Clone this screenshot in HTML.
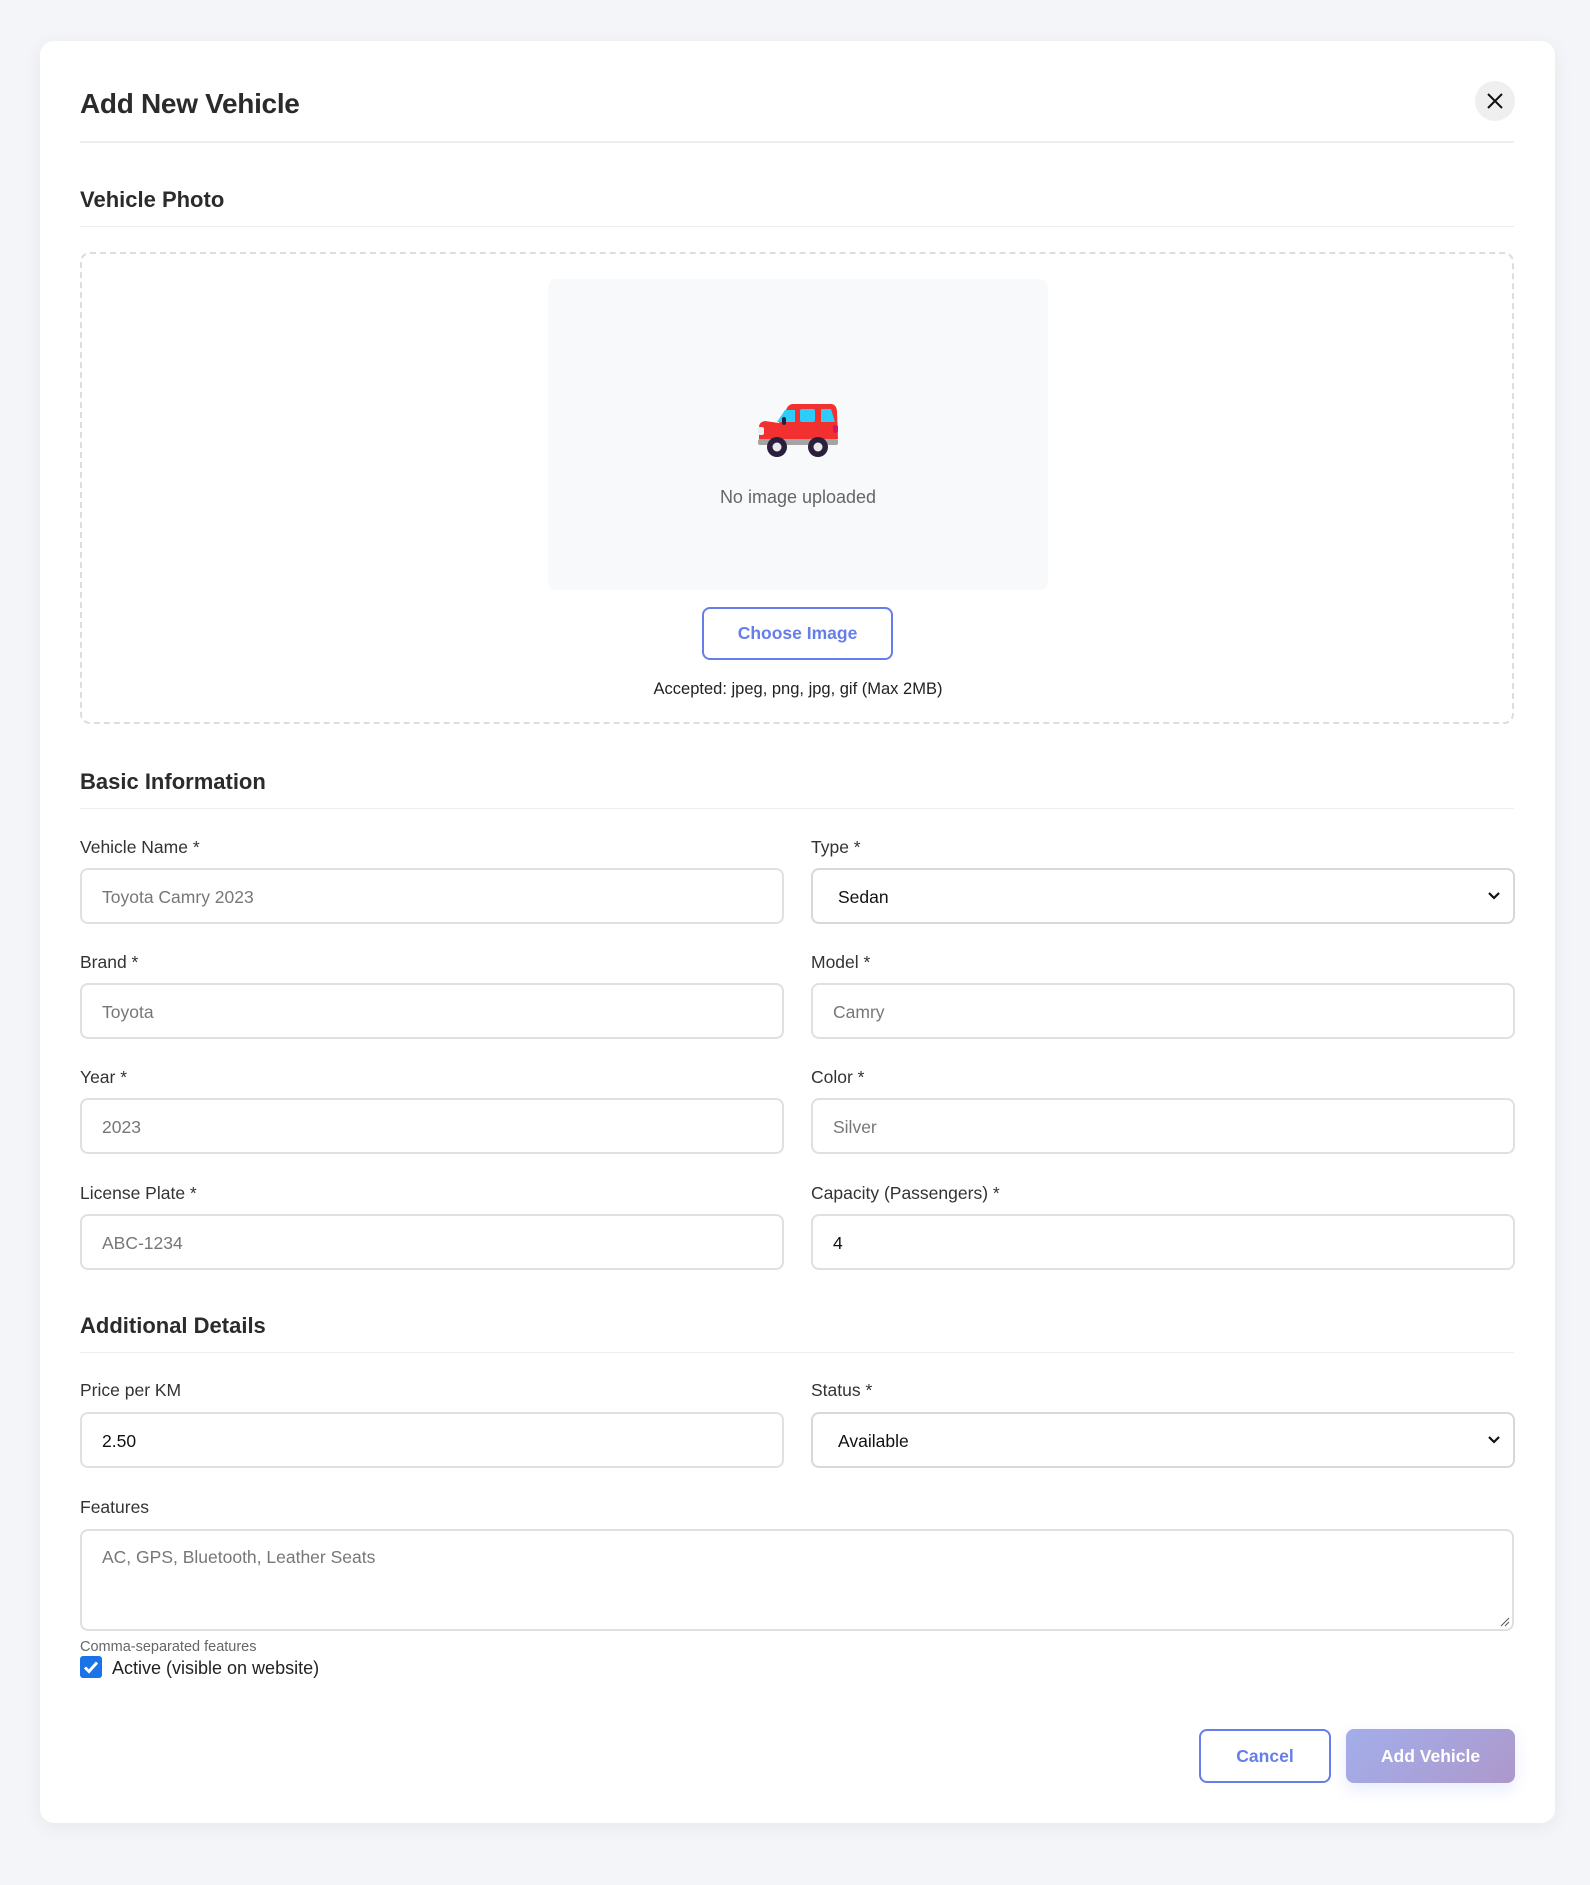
<!DOCTYPE html>
<html><head><meta charset="utf-8"><style>
*{box-sizing:border-box;margin:0;padding:0}
body{width:1590px;height:1885px;background:#f4f5f8;font-family:"Liberation Sans",sans-serif;position:relative;overflow:hidden}
.card{position:absolute;left:40px;top:41px;width:1515px;height:1782px;background:#fff;border-radius:14px;box-shadow:0 4px 20px rgba(0,0,0,0.06)}
.a{position:absolute}
h1{position:absolute;left:80px;top:88px;font-size:28px;font-weight:bold;color:#2b2b2b;letter-spacing:-0.3px}
.h2{position:absolute;left:80px;font-size:22px;font-weight:bold;color:#2b2b2b}
.line{position:absolute;left:80px;width:1434px;height:2px;background:#eeeeee}
.lbl{position:absolute;font-size:17.5px;color:#333;font-weight:500}
.in{position:absolute;width:704px;height:56px;border:2px solid #e0e0e0;border-radius:8px;font-size:17.5px;color:#777;padding:0 0 0 20px;line-height:54px}
.in.v{color:#111}
.sel{border-color:#d8d8d8}
.chev{position:absolute;right:12px;top:19px}
</style></head><body>
<div class="card"></div>
<h1>Add New Vehicle</h1>
<div class="a" style="left:1475px;top:81px;width:40px;height:40px;border-radius:50%;background:#efefef"></div>
<svg class="a" style="left:1485px;top:91px" width="20" height="20" viewBox="0 0 20 20"><path d="M3 3L17 17M17 3L3 17" stroke="#111" stroke-width="2"/></svg>
<div class="line" style="top:141px"></div>
<div class="h2" style="top:187px">Vehicle Photo</div>
<div class="line" style="top:226px;height:1px"></div>
<div class="a" style="left:80px;top:252px;width:1434px;height:472px;border:2px dashed #dddddd;border-radius:10px"></div>
<div class="a" style="left:548px;top:279px;width:500px;height:311px;background:#f8f9fa;border-radius:8px"></div>
<svg class="a" style="left:757px;top:403px" width="82" height="58" viewBox="0 0 82 58">
<path d="M22 20 L30 5 Q32 1 36 1 H74 Q79 1 80 8 L81 36 H2 V24 Q2 19 8 18 Z" fill="#f33030"/>
<path d="M20 19 L28 7 H38 V19 Z" fill="#2bcdfb"/>
<rect x="43" y="6" width="15" height="13" rx="2" fill="#2bcdfb"/>
<path d="M64 6 H74 L78 19 H64 Z" fill="#2bcdfb"/>
<rect x="25" y="14" width="4" height="8" rx="2" fill="#2a1f3c"/>
<rect x="1" y="24" width="6" height="8" rx="2" fill="#ededed"/>
<rect x="76" y="22" width="5" height="8" rx="2" fill="#d6155a"/>
<rect x="1" y="36" width="80" height="6" rx="2" fill="#a4a4a4"/>
<circle cx="20" cy="44" r="10" fill="#2a1f3c"/><circle cx="20" cy="44" r="4.5" fill="#e8e8e8"/>
<circle cx="61" cy="44" r="10" fill="#2a1f3c"/><circle cx="61" cy="44" r="4.5" fill="#e8e8e8"/>
</svg>
<div class="a" style="left:548px;top:487px;width:500px;text-align:center;font-size:18px;color:#666">No image uploaded</div>
<div class="a" style="left:702px;top:607px;width:191px;height:53px;border:2px solid #667eea;border-radius:8px;text-align:center;line-height:49px;font-size:17.5px;font-weight:bold;color:#667eea">Choose Image</div>
<div class="a" style="left:548px;top:680px;width:500px;text-align:center;font-size:16.5px;color:#222">Accepted: jpeg, png, jpg, gif (Max 2MB)</div>

<div class="h2" style="top:769px">Basic Information</div>
<div class="line" style="top:808px;height:1px"></div>

<div class="lbl" style="left:80px;top:837px">Vehicle Name *</div>
<div class="in" style="left:80px;top:868px">Toyota Camry 2023</div>
<div class="lbl" style="left:811px;top:837px">Type *</div>
<div class="in v sel" style="left:811px;top:868px;padding-left:25px">Sedan<svg class="chev" width="14" height="14" viewBox="0 0 14 14"><path d="M2 4L7 9L12 4" stroke="#111" stroke-width="2.2" fill="none"/></svg></div>

<div class="lbl" style="left:80px;top:952px">Brand *</div>
<div class="in" style="left:80px;top:983px">Toyota</div>
<div class="lbl" style="left:811px;top:952px">Model *</div>
<div class="in" style="left:811px;top:983px">Camry</div>

<div class="lbl" style="left:80px;top:1067px">Year *</div>
<div class="in" style="left:80px;top:1098px">2023</div>
<div class="lbl" style="left:811px;top:1067px">Color *</div>
<div class="in" style="left:811px;top:1098px">Silver</div>

<div class="lbl" style="left:80px;top:1183px">License Plate *</div>
<div class="in" style="left:80px;top:1214px">ABC-1234</div>
<div class="lbl" style="left:811px;top:1183px">Capacity (Passengers) *</div>
<div class="in v" style="left:811px;top:1214px">4</div>

<div class="h2" style="top:1313px">Additional Details</div>
<div class="line" style="top:1352px;height:1px"></div>

<div class="lbl" style="left:80px;top:1380px">Price per KM</div>
<div class="in v" style="left:80px;top:1412px">2.50</div>
<div class="lbl" style="left:811px;top:1380px">Status *</div>
<div class="in v sel" style="left:811px;top:1412px;padding-left:25px">Available<svg class="chev" width="14" height="14" viewBox="0 0 14 14"><path d="M2 4L7 9L12 4" stroke="#111" stroke-width="2.2" fill="none"/></svg></div>

<div class="lbl" style="left:80px;top:1497px">Features</div>
<div class="in" style="left:80px;top:1529px;width:1434px;height:102px;line-height:1;padding-top:18px">AC, GPS, Bluetooth, Leather Seats</div>
<svg class="a" style="left:1500px;top:1617px" width="10" height="10" viewBox="0 0 10 10"><path d="M1 9L9 1M5 9L9 5" stroke="#555" stroke-width="1"/></svg>
<div class="a" style="left:80px;top:1639px;font-size:14.5px;color:#666">Comma-separated features</div>
<div class="a" style="left:80px;top:1656px;width:22px;height:22px;background:#1a73e8;border-radius:3px"></div>
<svg class="a" style="left:82px;top:1658px" width="18" height="18" viewBox="0 0 18 18"><path d="M3 9.5L7 13.5L15 4.5" stroke="#fff" stroke-width="3" fill="none"/></svg>
<div class="a" style="left:112px;top:1658px;font-size:18px;color:#222">Active (visible on website)</div>

<div class="a" style="left:1199px;top:1729px;width:132px;height:54px;border:2px solid #667eea;border-radius:8px;text-align:center;line-height:50px;font-size:17.5px;font-weight:bold;color:#667eea">Cancel</div>
<div class="a" style="left:1346px;top:1729px;width:169px;height:54px;border-radius:8px;background:linear-gradient(135deg,#a3aeeb,#ad98cb);text-align:center;line-height:54px;font-size:17.5px;font-weight:bold;color:#fff;box-shadow:0 6px 16px rgba(102,126,234,0.15)">Add Vehicle</div>
</body></html>
